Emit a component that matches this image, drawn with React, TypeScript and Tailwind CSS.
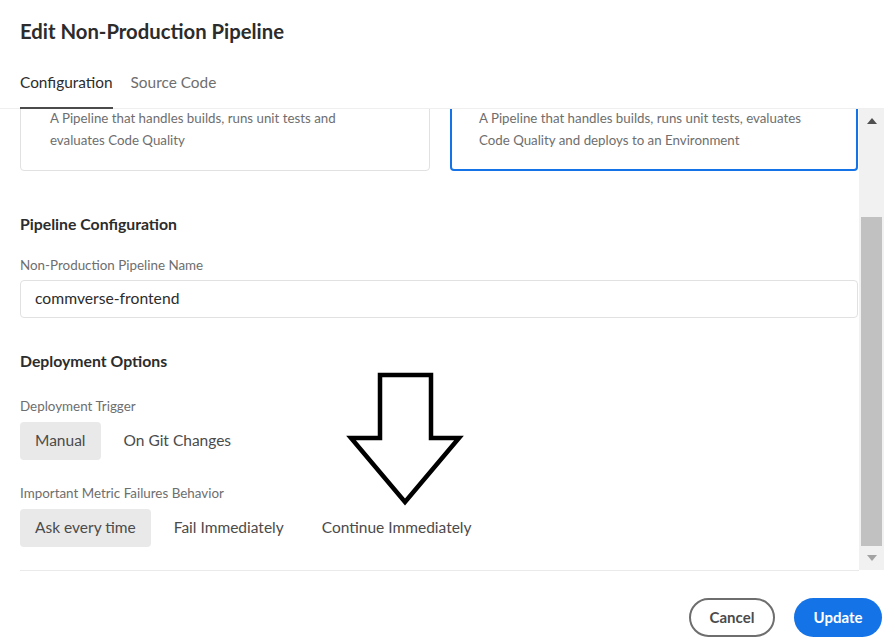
import React from 'react';

const font = { fontFamily: 'Lato, "Open Sans", sans-serif' };

function Toggle({ label, active }: { label: string; active?: boolean }) {
  return (
    <div
      className={`h-[38px] flex items-center px-[15px] rounded-[4px] text-[15.5px] text-[#4b4b4b] ${
        active ? 'bg-[#e9e9e9]' : ''
      }`}>
      {label}
    </div>
  );
}

function DownArrow() {
  return (
    <svg
      className="absolute left-[340px] top-[360px]"
      width="140"
      height="160"
      viewBox="0 0 140 160">
      <path
        d="M40 15 L91 15 L91 78 L119 78 L65 142 L11 78 L40 78 Z"
        fill="white"
        stroke="black"
        strokeWidth="4.5"
        strokeLinejoin="miter"
      />
    </svg>
  );
}

export default function App() {
  return (
    <div className="relative w-[895px] h-[644px] bg-white overflow-hidden" style={font}>
      {/* Header */}
      <div className="pl-5 pt-[17px] h-[64px]">
        <h1 className="text-[20.3px] leading-[28px] font-bold text-[#2c2c2c]">Edit Non-Production Pipeline</h1>
      </div>

      {/* Tabs */}
      <div className="flex gap-[18px] pl-5 h-[45px] border-b border-[#efefef] mr-[11px]">
        <div className="relative pt-[7px] text-[15.4px] leading-[22px] text-[#2c2c2c]">
          Configuration
          <span className="absolute left-0 right-0 bottom-[-1px] h-[2px] bg-[#4b4b4b]" />
        </div>
        <div className="pt-[7px] text-[15.4px] leading-[22px] text-[#6e6e6e]">Source Code</div>
      </div>

      {/* Scroll area */}
      <div className="flex h-[461px] mr-[11px]">
        <div className="flex-1 overflow-hidden">
          <div className="-mt-[26px] pl-5">
            <div className="grid grid-cols-[410px_408px] gap-5">
              <div className="border border-[#e1e1e1] rounded-[4px] pt-[23px] pb-[19px] pl-[29px] pr-4 text-[13.3px] leading-[22px] text-[#6e6e6e]">
                <p>A Pipeline that handles builds, runs unit tests and</p>
                <p>evaluates Code Quality</p>
              </div>
              <div className="border-2 border-[#1473e6] rounded-[4px] pt-[22px] pb-[18px] pl-[27px] pr-4 text-[13.3px] leading-[22px] text-[#6e6e6e]">
                <p>A Pipeline that handles builds, runs unit tests, evaluates</p>
                <p>Code Quality and deploys to an Environment</p>
              </div>
            </div>

            <h2 className="mt-[43px] text-[15.8px] leading-[20px] font-bold text-[#2c2c2c]">Pipeline Configuration</h2>
            <div className="mt-[22px] text-[13.4px] leading-[18px] text-[#6e6e6e]">Non-Production Pipeline Name</div>
            <div className="mt-[6px] w-[838px] h-[38px] border border-[#e1e1e1] rounded-[4px] flex items-center pl-[14px] text-[15.7px] text-[#2c2c2c]">
              commverse-frontend
            </div>

            <h2 className="mt-[33px] text-[15.8px] leading-[20px] font-bold text-[#2c2c2c]">Deployment Options</h2>
            <div className="mt-[26px] text-[13.4px] leading-[18px] text-[#6e6e6e]">Deployment Trigger</div>
            <div className="mt-[7px] flex gap-2">
              <Toggle label="Manual" active />
              <Toggle label="On Git Changes" />
            </div>
            <div className="mt-[24px] text-[13.4px] leading-[18px] text-[#6e6e6e]">Important Metric Failures Behavior</div>
            <div className="mt-[7px] flex gap-2">
              <Toggle label="Ask every time" active />
              <Toggle label="Fail Immediately" />
              <Toggle label="Continue Immediately" />
            </div>
          </div>
        </div>

        {/* Scrollbar */}
        <div className="w-[25px] bg-[#f1f1f1] flex flex-col items-center">
          <div className="h-[24px] flex items-center justify-center">
            <span className="w-0 h-0 border-l-[5px] border-r-[5px] border-b-[6px] border-l-transparent border-r-transparent border-b-[#505050]" />
          </div>
          <div className="h-[84px]" />
          <div className="w-[21px] h-[329px] bg-[#c1c1c1]" />
          <div className="flex-1 flex items-center justify-center">
            <span className="w-0 h-0 border-l-[5px] border-r-[5px] border-t-[6px] border-l-transparent border-r-transparent border-t-[#a3a3a3]" />
          </div>
        </div>
      </div>

      {/* Footer */}
      <div className="ml-5 mr-[36px] border-t border-[#eaeaea]" />
      <div className="flex justify-end gap-[19px] pr-[13px] pt-[27px]">
        <button className="w-[86px] h-[39px] rounded-full border-2 border-[#6e6e6e] text-[15px] font-bold text-[#4b4b4b]">
          Cancel
        </button>
        <button className="w-[88px] h-[39px] rounded-full bg-[#1473e6] text-[15px] font-bold text-white">
          Update
        </button>
      </div>

      <DownArrow />
    </div>
  );
}
